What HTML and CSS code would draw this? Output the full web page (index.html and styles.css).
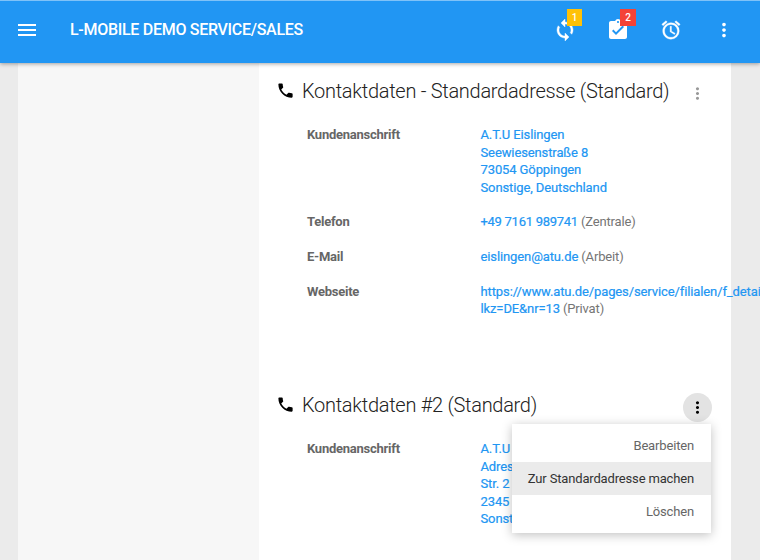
FILE: index.html
```html
<!DOCTYPE html>
<html lang="de">
<head>
<meta charset="utf-8">
<title>L-mobile Demo Service/Sales</title>
<link rel="stylesheet" href="styles.css">
</head>
<body>
<svg class="defs" width="0" height="0" aria-hidden="true">
  <symbol id="phone" viewBox="0 0 24 24"><path d="M6.62 10.79c1.44 2.83 3.76 5.14 6.59 6.59l2.2-2.2c.27-.27.67-.36 1.02-.24 1.12.37 2.33.57 3.57.57.55 0 1 .45 1 1V20c0 .55-.45 1-1 1-9.39 0-17-7.61-17-17 0-.55.45-1 1-1h3.5c.55 0 1 .45 1 1 0 1.25.2 2.45.57 3.57.11.35.03.74-.25 1.02l-2.2 2.2z"/></symbol>
  <symbol id="more" viewBox="0 0 24 24"><path d="M12 8c1.1 0 2-.9 2-2s-.9-2-2-2-2 .9-2 2 .9 2 2 2zm0 2c-1.1 0-2 .9-2 2s.9 2 2 2 2-.9 2-2-.9-2-2-2zm0 6c-1.100 0-2 .9-2 2s.9 2 2 2 2-.9 2-2-.9-2-2-2z"/></symbol>
</svg>
<div class="app">
  <header class="topbar">
    <svg class="icon menu-icon" viewBox="0 0 24 24"><path d="M3 18h18v-2H3v2zm0-5h18v-2H3v2zm0-7v2h18V6H3z"/></svg>
    <h1 class="brand">L-MOBILE DEMO SERVICE/SALES</h1>
    <nav class="actions">
      <a class="action"><svg class="icon sync" viewBox="0 0 24 24"><path d="M12 4V1L8 5l4 4V6c3.310 0 6 2.690 6 6 0 1.010-.25 1.970-.7 2.800l1.460 1.460C19.540 15.030 20 13.570 20 12c0-4.420-3.580-8-8-8zm0 14c-3.310 0-6-2.690-6-6 0-1.010.25-1.970.7-2.800L5.240 7.740C4.460 8.970 4 10.430 4 12c0 4.420 3.580 8 8 8v3l4-4-4-4v3z"/></svg><span class="badge badge-amber">1</span></a>
      <a class="action"><svg class="icon tasks" viewBox="0 0 24 24"><path d="M19 3h-4.180C14.400 1.840 13.300 1 12 1s-2.400.84-2.820 2H5c-1.100 0-2 .9-2 2v14c0 1.100.9 2 2 2h14c1.100 0 2-.9 2-2V5c0-1.100-.9-2-2-2zm-7 0c.55 0 1 .45 1 1s-.45 1-1 1-1-.45-1-1 .45-1 1-1zm-2 14l-4-4 1.410-1.410L10 14.170l6.590-6.590L18 9l-8 8z"/></svg><span class="badge badge-red">2</span></a>
      <a class="action"><svg class="icon alarm" viewBox="0 0 24 24"><path d="M22 5.720l-4.600-3.860-1.290 1.530 4.600 3.860L22 5.720zM7.880 3.390L6.600 1.860 2 5.710l1.290 1.530 4.590-3.850zM12.500 8H11v6l4.750 2.850.75-1.230-4-2.370V8zM12 4c-4.970 0-9 4.030-9 9s4.020 9 9 9a9 9 0 0 0 0-18zm0 16c-3.870 0-7-3.130-7-7s3.130-7 7-7 7 3.130 7 7-3.130 7-7 7z"/></svg></a>
      <a class="action"><svg class="icon"><use href="#more"/></svg></a>
    </nav>
  </header>
  <main class="page">
    <aside class="side"></aside>
    <div class="content">
      <section class="card first">
        <div class="card-head">
          <svg class="phone"><use href="#phone"/></svg>
          <h2>Kontaktdaten - Standardadresse (Standard)</h2>
          <button class="more"><svg><use href="#more"/></svg></button>
        </div>
        <dl class="fields">
          <dt>Kundenanschrift</dt>
          <dd><a>A.T.U Eislingen<br>Seewiesenstraße 8<br>73054 Göppingen<br>Sonstige, Deutschland</a></dd>
          <dt>Telefon</dt>
          <dd><a class="tel">+49 7161 989741</a> (Zentrale)</dd>
          <dt>E-Mail</dt>
          <dd><a>eislingen@atu.de</a> (Arbeit)</dd>
          <dt>Webseite</dt>
          <dd><a>https://www.atu.de/pages/service/filialen/f_detai<br>lkz=DE&amp;nr=13</a> (Privat)</dd>
        </dl>
      </section>
      <section class="card">
        <div class="card-head">
          <svg class="phone"><use href="#phone"/></svg>
          <h2>Kontaktdaten #2 (Standard)</h2>
          <button class="more open"><svg><use href="#more"/></svg></button>
          <ul class="dropdown">
            <li>Bearbeiten</li>
            <li class="active">Zur Standardadresse machen</li>
            <li>Löschen</li>
          </ul>
        </div>
        <dl class="fields">
          <dt>Kundenanschrift</dt>
          <dd><a>A.T.U<br>Adres<br>Str. 2<br>2345<br>Sonst</a></dd>
        </dl>
      </section>
    </div>
  </main>
</div>
</body>
</html>
```
FILE: styles.css
```css
* { box-sizing: border-box; }
body { margin: 0; background: #fff; font-family: Roboto, sans-serif; font-size: 13px; color: #757575; overflow: hidden; }
h1, h2, dl, dd, ul { margin: 0; padding: 0; }
svg { display: block; fill: currentColor; }
.defs { position: absolute; }
.app { width: 760px; height: 560px; overflow: hidden; display: flex; flex-direction: column; background: #ebebeb; }
.topbar { position: relative; z-index: 2; flex: none; height: 63px; display: flex; align-items: center; padding: 0 13px 4px 15px; border-top: 1px solid #7fc2f8; background: #2196f3; color: #fff; box-shadow: 0 1px 4px rgba(0, 0, 0, .35); }
.icon { width: 24px; height: 24px; }
.brand { margin-left: 31px; font-size: 16px; font-weight: 500; line-height: 20px; letter-spacing: -.29px; white-space: nowrap; }
.actions { display: flex; gap: 6px; margin-left: auto; }
.action { position: relative; width: 47px; height: 24px; display: flex; justify-content: center; }
.action .icon { width: 22px; height: 22px; margin-top: 1px; }
.action .sync, .action .tasks { width: 24px; height: 24px; margin-top: 0; }
.sync, .alarm { stroke: currentColor; stroke-width: .4; }
.badge { position: absolute; top: -9px; left: 26px; width: 15px; height: 17px; line-height: 17px; text-align: center; font-size: 10px; font-weight: 500; }
.badge-amber { background: #ffc107; }
.badge-red { width: 16px; background: #f44336; }
.page { flex: 1; display: flex; margin: 0 29px 0 18px; min-height: 0; }
.side { width: 241px; flex: none; background: #f7f7f7; }
.content { flex: 1; min-width: 0; background: #fff; }
.card { height: 314px; }
.card-head { position: relative; height: 63px; display: flex; align-items: flex-start; padding: 12px 19px 0 17px; color: #000; }
.phone { width: 19px; height: 19px; margin-top: 6px; }
h2 { margin-left: 7px; font-size: 20px; font-weight: 300; line-height: 32px; letter-spacing: -.29px; white-space: nowrap; color: #222; }
.more { width: 29px; height: 29px; margin: 4px 0 0 auto; padding: 0; border: 0; border-radius: 50%; background: none; color: #999; display: flex; align-items: center; justify-content: center; }
.more svg { width: 19px; height: 19px; }
.more.open { background: #e3e3e3; color: #000; }
.fields { display: grid; grid-template-columns: 173.5px 1fr; row-gap: 17.3px; padding-left: 48px; line-height: 17.5px; white-space: nowrap; }
dt { font-weight: 700; color: #666; letter-spacing: -.25px; }
dd { letter-spacing: -.15px; }
dd a { color: #2196f3; letter-spacing: -.11px; -webkit-text-stroke: .2px currentColor; }
dd .tel { letter-spacing: -.28px; }
.dropdown { position: absolute; z-index: 1; top: 47px; right: 20px; width: 199px; height: 109px; padding: 5px 0; list-style: none; background: #fff; box-shadow: 0 2px 10px rgba(0, 0, 0, .25); }
.dropdown li { height: 33px; line-height: 34px; padding-right: 17px; text-align: right; letter-spacing: -.16px; color: #666; white-space: nowrap; }
.dropdown .active { background: #ebebeb; color: #333; }
```
